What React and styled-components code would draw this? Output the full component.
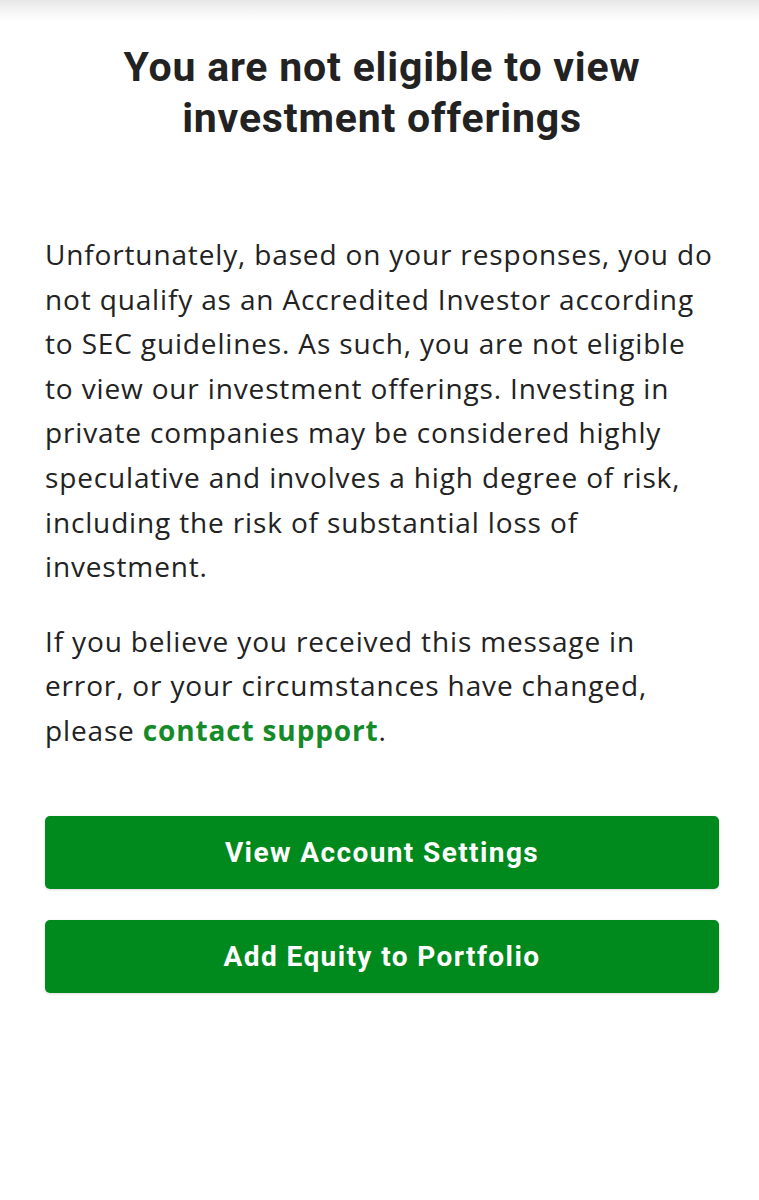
import React from "react";
import styled, { createGlobalStyle } from "styled-components";

const GlobalStyle = createGlobalStyle`
  html, body {
    margin: 0;
    padding: 0;
    background: #ffffff;
  }
  body {
    font-family: "Open Sans", "Noto Sans", sans-serif;
    color: #222222;
  }
`;

const Page = styled.div`
  width: 100%;
  min-height: 1200px;
  background: #fff;
  display: flex;
  flex-direction: column;
`;

const TopShade = styled.div`
  height: 22px;
  background: linear-gradient(to bottom, #e6e6e6 0%, #f4f4f4 45%, #ffffff 100%);
`;

const Content = styled.main`
  display: flex;
  flex-direction: column;
  padding: 20px 40px 0 45px;
`;

const Title = styled.h1`
  margin: 0 0 88px 0;
  padding: 0 20px;
  text-align: center;
  font-family: "Roboto", "Liberation Sans", sans-serif;
  font-weight: 700;
  font-size: 41px;
  line-height: 51px;
  letter-spacing: 0.8px;
  color: #222;
`;

const Paragraph = styled.p`
  margin: 0 0 30px 0;
  font-size: 28px;
  line-height: 44.6px;
  letter-spacing: 0.85px;
  color: #222;
`;

const SupportLink = styled.a`
  color: #158a28;
  font-weight: 700;
  text-decoration: none;
`;

const Actions = styled.div`
  display: flex;
  flex-direction: column;
  gap: 31px;
  margin-top: 33px;
`;

const Button = styled.button`
  width: 100%;
  height: 73px;
  border: none;
  border-radius: 5px;
  background-color: #00891d;
  color: #fff;
  font-family: "Roboto", "Liberation Sans", sans-serif;
  font-weight: 700;
  font-size: 28px;
  letter-spacing: 1.4px;
  box-shadow: 0 1px 3px rgba(0, 0, 0, 0.15);
  cursor: pointer;
`;

const App = () => {
  return (
    <Page>
      <GlobalStyle />
      <TopShade />
      <Content>
        <Title>You are not eligible to view investment offerings</Title>
        <Paragraph>
          Unfortunately, based on your responses, you do not qualify as an
          Accredited Investor according to SEC guidelines. As such, you are not
          eligible to view our investment offerings. Investing in private
          companies may be considered highly speculative and involves a high
          degree of risk, including the risk of substantial loss of investment.
        </Paragraph>
        <Paragraph>
          If you believe you received this message in error, or your
          circumstances have changed, please{" "}
          <SupportLink href="#">contact support</SupportLink>.
        </Paragraph>
        <Actions>
          <Button>View Account Settings</Button>
          <Button>Add Equity to Portfolio</Button>
        </Actions>
      </Content>
    </Page>
  );
};

export default App;
